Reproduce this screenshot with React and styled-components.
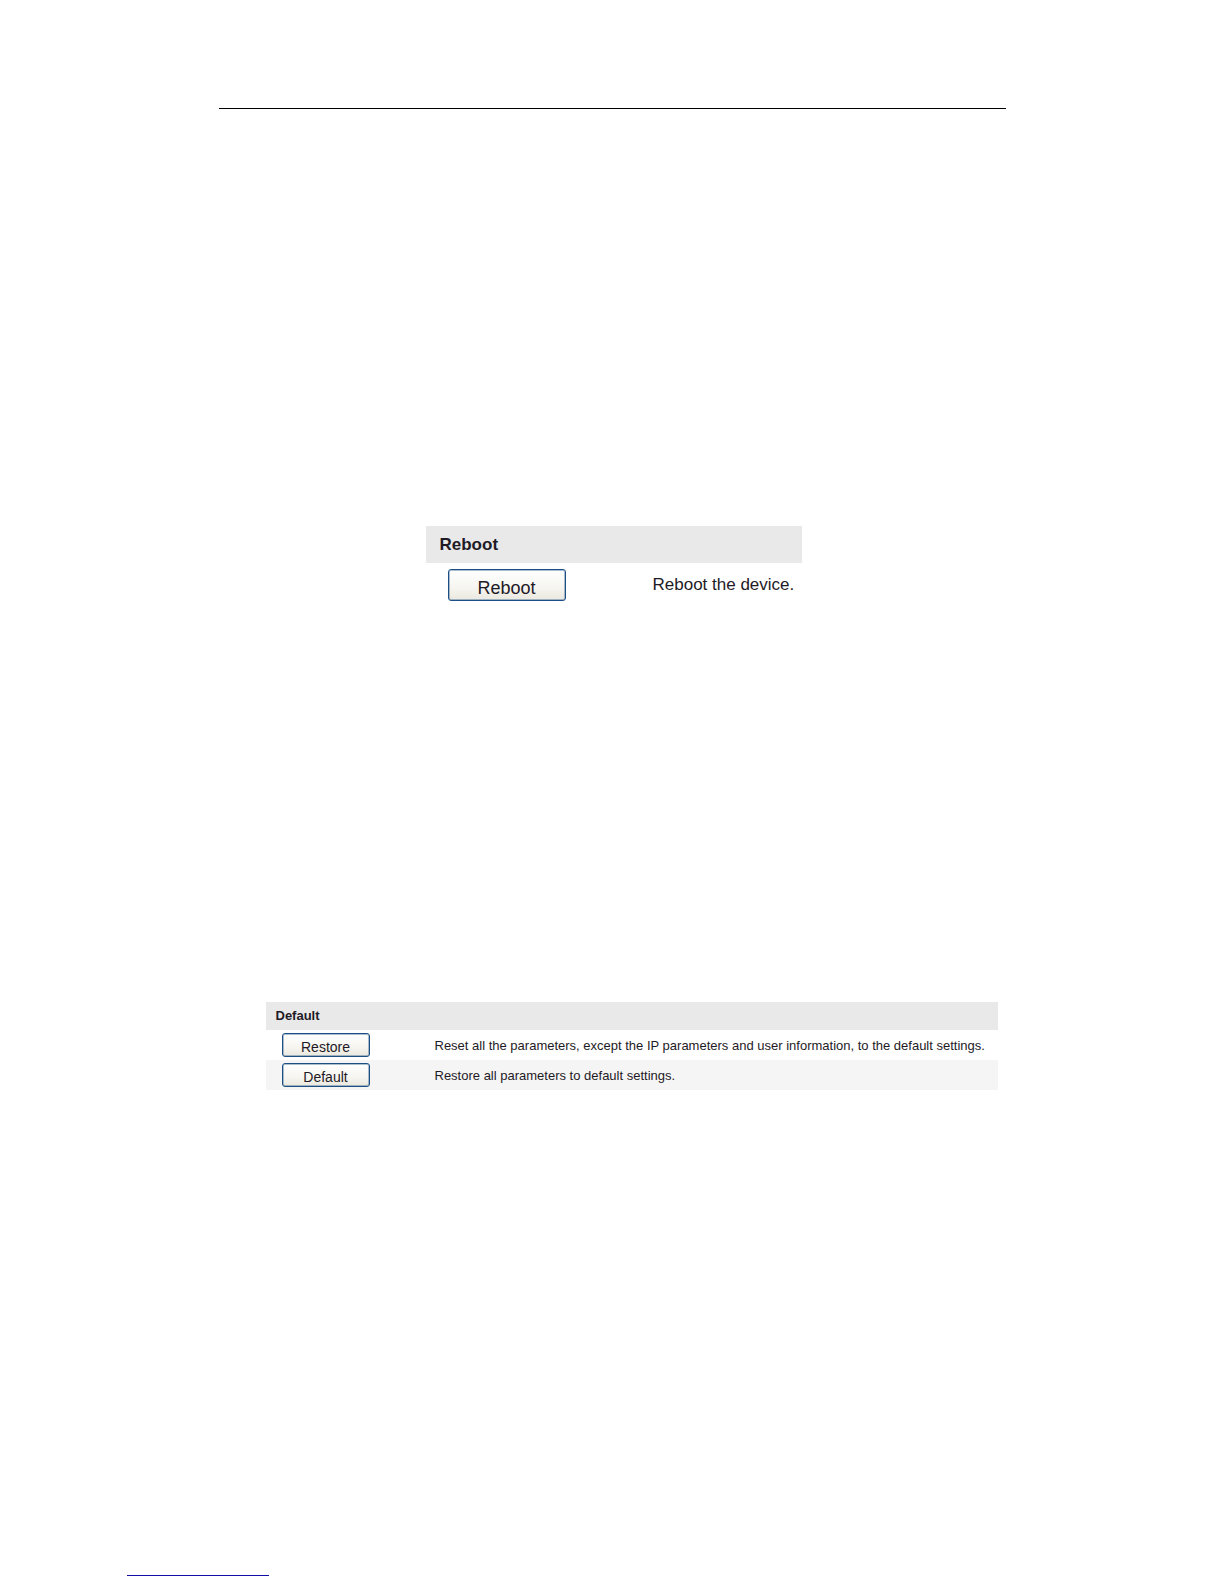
import React from "react"
import styled, { createGlobalStyle, css } from "styled-components"

const color_ink = "#1e1a26"
const color_heading = "#e9e9e9"
const color_stripe = "#f5f5f5"
const color_border = "#1b4f86"
const color_link = "#1010a8"

const GlobalStyle = createGlobalStyle`
  * {
    box-sizing: border-box;
  }

  body {
    margin: 0;
    background: #ffffff;
    color: ${color_ink};
    font-family: "Liberation Sans", Arial, sans-serif;
  }
`

const Page = styled.div`
  display: flex;
  flex-direction: column;
  min-height: 100vh;
`

const Content = styled.div`
  display: flex;
  flex-direction: column;
  flex: 1;
  width: 100%;
  max-width: 787px;
  margin: 0 auto;
  padding-top: 108px;
`

const HeaderRule = styled.hr`
  width: 100%;
  height: 1px;
  margin: 0;
  border: 0;
  background: #000000;
`

const Sections = styled.main`
  padding: 417px 8px 0 47px;
`

const large = css`
  --heading-size: 17px;
  --heading-height: 37px;
  --heading-indent: 14px;
  --row-height: 44px;
  --row-indent: 22px;
  --label-column: 205px;
  --text-size: 17px;
  --button-text: 18px;
  --button-width: 118px;
  --button-height: 32px;
  --button-drop: 5px;
  width: 376px;
  margin-left: 160px;
`

const small = css`
  --heading-size: 13px;
  --heading-height: 28px;
  --heading-indent: 10px;
  --row-height: 30px;
  --row-indent: 16px;
  --label-column: 153px;
  --text-size: 13px;
  --button-text: 14px;
  --button-width: 88px;
  --button-height: 24px;
  --button-drop: 4px;
  margin-top: 395px;
`

const Panel = styled.section`
  ${(props) => (props.$size === "large" ? large : small)}
`

const PanelHeading = styled.h2`
  margin: 0;
  padding-left: var(--heading-indent);
  background: ${color_heading};
  font-size: var(--heading-size);
  line-height: var(--heading-height);
`

const Row = styled.div`
  display: grid;
  grid-template-columns: var(--label-column) 1fr;
  align-items: center;
  height: var(--row-height);
  padding-left: var(--row-indent);
  background: ${(props) => (props.$striped ? color_stripe : "transparent")};
`

const ActionButton = styled.button`
  width: var(--button-width);
  height: var(--button-height);
  padding: var(--button-drop) 0 0;
  border: 1px solid ${color_border};
  border-radius: 3px;
  background: linear-gradient(#ffffff, #f6f5f0 60%, #eae8df);
  box-shadow: inset 0 0 0 1px rgba(47, 95, 140, 0.4);
  color: ${color_ink};
  font-family: inherit;
  font-size: var(--button-text);
  line-height: 1;
`

const Description = styled.p`
  margin: 0;
  font-size: var(--text-size);
  white-space: nowrap;
`

const Footer = styled.footer`
  padding: 0 127px 8px;
`

const FooterRule = styled.hr`
  width: 142px;
  height: 1px;
  margin: 0;
  border: 0;
  background: ${color_link};
`

const Action = ({ id, label, text, striped }) => (
  <Row $striped={striped}>
    <ActionButton type="button" aria-describedby={id}>
      {label}
    </ActionButton>
    <Description id={id}>{text}</Description>
  </Row>
)

const App = () => {
  return (
    <Page>
      <GlobalStyle />
      <Content>
        <HeaderRule />
        <Sections>
          <Panel $size="large">
            <PanelHeading>Reboot</PanelHeading>
            <Action
              id="reboot-text"
              label="Reboot"
              text="Reboot the device."
            />
          </Panel>

          <Panel $size="small">
            <PanelHeading>Default</PanelHeading>
            <Action
              id="restore-text"
              label="Restore"
              text="Reset all the parameters, except the IP parameters and user information, to the default settings."
            />
            <Action
              id="default-text"
              label="Default"
              text="Restore all parameters to default settings."
              striped
            />
          </Panel>
        </Sections>
      </Content>
      <Footer>
        <FooterRule />
      </Footer>
    </Page>
  )
}

export default App
